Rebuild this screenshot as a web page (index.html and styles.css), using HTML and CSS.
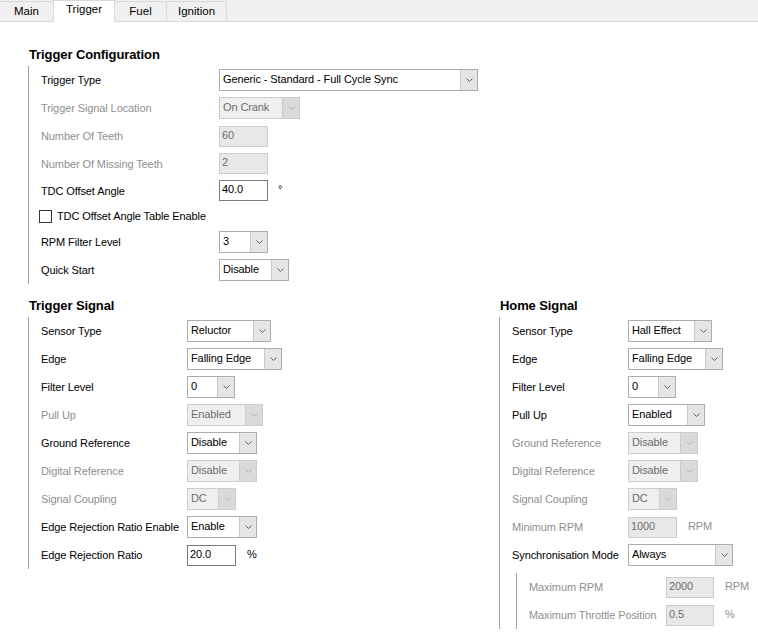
FILE: index.html
```html
<!DOCTYPE html>
<html>
<head>
<meta charset="utf-8">
<link rel="stylesheet" href="styles.css">
</head>
<body>
<div class="tabs">
  <div class="tab t-main">Main</div>
  <div class="tab t-trig active">Trigger</div>
  <div class="tab t-fuel">Fuel</div>
  <div class="tab t-ign">Ignition</div>
</div>
<div class="content">
  <section class="group cfg">
    <h2>Trigger Configuration</h2>
    <div class="rows">
      <div class="row"><span class="lbl">Trigger Type</span><div class="sel w259"><span class="val">Generic - Standard - Full Cycle Sync</span><span class="arr"><svg width="7" height="4" viewBox="0 0 7 4"><path d="M0.5 0.5L3.5 3.5L6.5 0.5"/></svg></span></div></div>
      <div class="row dim"><span class="lbl">Trigger Signal Location</span><div class="sel dis w81"><span class="val">On Crank</span><span class="arr"><svg width="7" height="4" viewBox="0 0 7 4"><path d="M0.5 0.5L3.5 3.5L6.5 0.5"/></svg></span></div></div>
      <div class="row dim"><span class="lbl">Number Of Teeth</span><div class="inp dis w49">60</div></div>
      <div class="row dim r27"><span class="lbl">Number Of Missing Teeth</span><div class="inp dis w49">2</div></div>
      <div class="row r27"><span class="lbl">TDC Offset Angle</span><div class="inp w49">40.0</div><span class="unit deg">°</span></div>
      <div class="row r24"><span class="chk"></span><span class="chklbl">TDC Offset Angle Table Enable</span></div>
      <div class="row"><span class="lbl">RPM Filter Level</span><div class="sel w49"><span class="val">3</span><span class="arr"><svg width="7" height="4" viewBox="0 0 7 4"><path d="M0.5 0.5L3.5 3.5L6.5 0.5"/></svg></span></div></div>
      <div class="row"><span class="lbl">Quick Start</span><div class="sel w70"><span class="val">Disable</span><span class="arr"><svg width="7" height="4" viewBox="0 0 7 4"><path d="M0.5 0.5L3.5 3.5L6.5 0.5"/></svg></span></div></div>
    </div>
  </section>

  <div class="cols">
    <section class="group trig">
      <h2>Trigger Signal</h2>
      <div class="rows">
        <div class="row"><span class="lbl">Sensor Type</span><div class="sel w84"><span class="val">Reluctor</span><span class="arr"><svg width="7" height="4" viewBox="0 0 7 4"><path d="M0.5 0.5L3.5 3.5L6.5 0.5"/></svg></span></div></div>
        <div class="row"><span class="lbl">Edge</span><div class="sel w95"><span class="val">Falling Edge</span><span class="arr"><svg width="7" height="4" viewBox="0 0 7 4"><path d="M0.5 0.5L3.5 3.5L6.5 0.5"/></svg></span></div></div>
        <div class="row"><span class="lbl">Filter Level</span><div class="sel w48"><span class="val">0</span><span class="arr"><svg width="7" height="4" viewBox="0 0 7 4"><path d="M0.5 0.5L3.5 3.5L6.5 0.5"/></svg></span></div></div>
        <div class="row dim"><span class="lbl">Pull Up</span><div class="sel dis w76"><span class="val">Enabled</span><span class="arr"><svg width="7" height="4" viewBox="0 0 7 4"><path d="M0.5 0.5L3.5 3.5L6.5 0.5"/></svg></span></div></div>
        <div class="row"><span class="lbl">Ground Reference</span><div class="sel w70"><span class="val">Disable</span><span class="arr"><svg width="7" height="4" viewBox="0 0 7 4"><path d="M0.5 0.5L3.5 3.5L6.5 0.5"/></svg></span></div></div>
        <div class="row dim"><span class="lbl">Digital Reference</span><div class="sel dis w70"><span class="val">Disable</span><span class="arr"><svg width="7" height="4" viewBox="0 0 7 4"><path d="M0.5 0.5L3.5 3.5L6.5 0.5"/></svg></span></div></div>
        <div class="row dim"><span class="lbl">Signal Coupling</span><div class="sel dis w49"><span class="val">DC</span><span class="arr"><svg width="7" height="4" viewBox="0 0 7 4"><path d="M0.5 0.5L3.5 3.5L6.5 0.5"/></svg></span></div></div>
        <div class="row"><span class="lbl">Edge Rejection Ratio Enable</span><div class="sel w70"><span class="val">Enable</span><span class="arr"><svg width="7" height="4" viewBox="0 0 7 4"><path d="M0.5 0.5L3.5 3.5L6.5 0.5"/></svg></span></div></div>
        <div class="row"><span class="lbl">Edge Rejection Ratio</span><div class="inp w49">20.0</div><span class="unit">%</span></div>
      </div>
    </section>

    <section class="group home">
      <h2>Home Signal</h2>
      <div class="rows">
        <div class="row"><span class="lbl">Sensor Type</span><div class="sel w84"><span class="val">Hall Effect</span><span class="arr"><svg width="7" height="4" viewBox="0 0 7 4"><path d="M0.5 0.5L3.5 3.5L6.5 0.5"/></svg></span></div></div>
        <div class="row"><span class="lbl">Edge</span><div class="sel w95"><span class="val">Falling Edge</span><span class="arr"><svg width="7" height="4" viewBox="0 0 7 4"><path d="M0.5 0.5L3.5 3.5L6.5 0.5"/></svg></span></div></div>
        <div class="row"><span class="lbl">Filter Level</span><div class="sel w48"><span class="val">0</span><span class="arr"><svg width="7" height="4" viewBox="0 0 7 4"><path d="M0.5 0.5L3.5 3.5L6.5 0.5"/></svg></span></div></div>
        <div class="row"><span class="lbl">Pull Up</span><div class="sel w77"><span class="val">Enabled</span><span class="arr"><svg width="7" height="4" viewBox="0 0 7 4"><path d="M0.5 0.5L3.5 3.5L6.5 0.5"/></svg></span></div></div>
        <div class="row dim"><span class="lbl">Ground Reference</span><div class="sel dis w70"><span class="val">Disable</span><span class="arr"><svg width="7" height="4" viewBox="0 0 7 4"><path d="M0.5 0.5L3.5 3.5L6.5 0.5"/></svg></span></div></div>
        <div class="row dim"><span class="lbl">Digital Reference</span><div class="sel dis w70"><span class="val">Disable</span><span class="arr"><svg width="7" height="4" viewBox="0 0 7 4"><path d="M0.5 0.5L3.5 3.5L6.5 0.5"/></svg></span></div></div>
        <div class="row dim"><span class="lbl">Signal Coupling</span><div class="sel dis w49"><span class="val">DC</span><span class="arr"><svg width="7" height="4" viewBox="0 0 7 4"><path d="M0.5 0.5L3.5 3.5L6.5 0.5"/></svg></span></div></div>
        <div class="row dim"><span class="lbl">Minimum RPM</span><div class="inp dis w49">1000</div><span class="unit">RPM</span></div>
        <div class="row"><span class="lbl">Synchronisation Mode</span><div class="sel w105"><span class="val">Always</span><span class="arr"><svg width="7" height="4" viewBox="0 0 7 4"><path d="M0.5 0.5L3.5 3.5L6.5 0.5"/></svg></span></div></div>
        <div class="sub">
          <div class="row dim"><span class="lbl">Maximum RPM</span><div class="inp dis w48">2000</div><span class="unit">RPM</span></div>
          <div class="row dim"><span class="lbl">Maximum Throttle Position</span><div class="inp dis w48">0.5</div><span class="unit">%</span></div>
        </div>
      </div>
    </section>
  </div>
</div>
</body>
</html>
```

FILE: styles.css
```css
html, body {
  margin: 0;
  padding: 0;
}
body {
  width: 758px;
  height: 641px;
  overflow: hidden;
  background: #fff;
  color: #000;
  font-family: "Liberation Sans", Arial, sans-serif;
  font-size: 11px;
  letter-spacing: -0.1px;
}

/* Tabs */
.tabs {
  display: flex;
  align-items: flex-end;
  height: 21px;
  background: #f0f0f0;
  border-bottom: 1px solid #d9d9d9;
}
.tab {
  box-sizing: border-box;
  height: 20px;
  line-height: 19px;
  text-align: center;
  border: 1px solid #d9d9d9;
  border-bottom: none;
  margin-left: -1px;
  background: #f0f0f0;
  color: #000;
  font-size: 11.5px;
  letter-spacing: 0;
}
.tab.active {
  height: 22px;
  line-height: 17px;
  margin-bottom: -1px;
  background: #fff;
  position: relative;
}
.t-main { width: 55px; }
.t-trig { width: 62px; }
.t-fuel { width: 53px; }
.t-ign { width: 61px; }

/* Content */
.content {
  padding-left: 28px;
  padding-top: 22px;
}
.group h2 {
  margin: 0;
  padding-left: 1px;
  height: 22px;
  line-height: 22px;
  font-size: 13px;
  font-weight: bold;
  letter-spacing: -0.1px;
}
.rows {
  border-left: 1px solid #a0a0a0;
  padding-left: 12px;
}
.row {
  display: flex;
  align-items: center;
  height: 28px;
}
.row.r27 { height: 27px; }
.row.r24 { height: 24px; }
.lbl {
  flex: none;
  white-space: nowrap;
}
.cfg .lbl { width: 178px; }
.trig .lbl { width: 146px; }
.home .lbl { width: 116px; }
.home .sub .lbl { width: 137px; }
.dim .lbl { color: #8f8f8f; }

.cols {
  display: flex;
  margin-top: 11px;
}
.trig { width: 471px; flex: none; }
.home { flex: 1; }

.sub {
  margin-left: 4px;
  margin-top: 4px;
  border-left: 1px solid #a0a0a0;
  padding-left: 12px;
}

/* Controls */
.sel {
  box-sizing: border-box;
  height: 22px;
  display: flex;
  border: 1px solid #acacac;
  background: #fff;
  flex: none;
}
.sel .val {
  flex: 1;
  padding-left: 3px;
  line-height: 18px;
  white-space: nowrap;
  overflow: hidden;
}
.sel .arr {
  width: 16px;
  flex: none;
  display: flex;
  align-items: center;
  justify-content: center;
  background: #e5e5e5;
  border-left: 1px solid #c8c8c8;
}
.sel .arr svg path {
  fill: none;
  stroke: #606060;
  stroke-width: 1;
}
.sel.dis {
  background: #efefef;
  border-color: #cccccc;
  color: #6d6d6d;
}
.sel.dis .arr {
  background: #dadada;
  border-left-color: #cccccc;
}
.sel.dis .arr svg path {
  stroke: #b0b0b0;
}

.inp {
  box-sizing: border-box;
  height: 21px;
  flex: none;
  border: 1px solid #7a7a7a;
  padding-left: 2px;
  line-height: 17px;
  background: #fff;
}
.inp.dis {
  background: #e8e8e8;
  border-color: #cccccc;
  color: #6d6d6d;
}
.unit {
  margin-left: 11px;
  margin-top: -2px;
}
.dim .unit { color: #8f8f8f; }
.unit.deg { margin-left: 10px; margin-top: -4px; }

.chk {
  box-sizing: border-box;
  width: 13px;
  height: 13px;
  border: 1px solid #333;
  background: #fff;
  margin-left: -2px;
  margin-right: 5px;
  flex: none;
}
.w48 { width: 48px; }
.w49 { width: 49px; }
.w70 { width: 70px; }
.w76 { width: 76px; }
.w77 { width: 77px; }
.w81 { width: 81px; }
.w84 { width: 84px; }
.w95 { width: 95px; }
.w105 { width: 105px; }
.w259 { width: 259px; }
```
